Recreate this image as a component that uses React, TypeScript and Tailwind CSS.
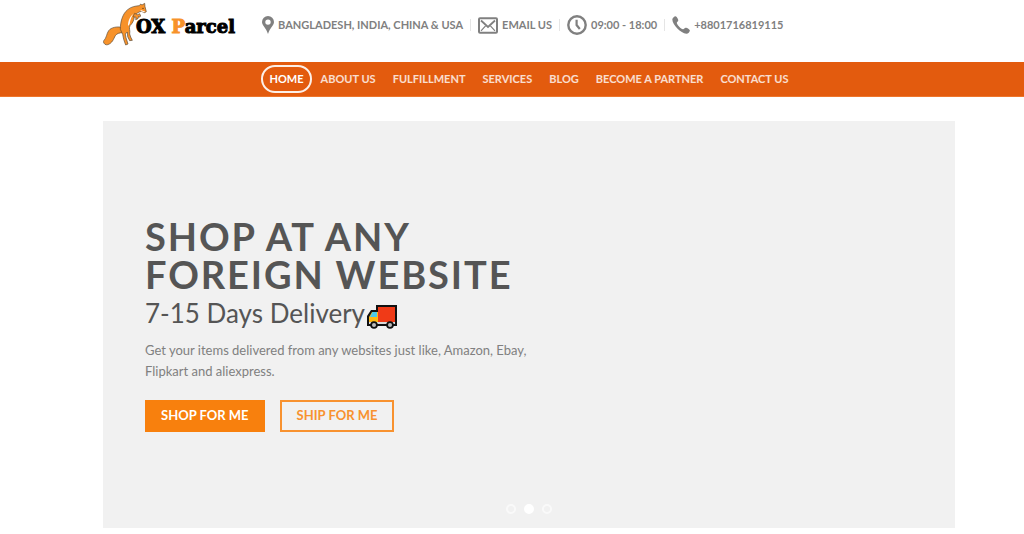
import type { ReactNode } from "react"

type NavItem = {
  label: string
  active?: boolean
}

type ContactItem = {
  label: string
  icon: ReactNode
}

const navItems: NavItem[] = [
  { label: "Home", active: true },
  { label: "About us" },
  { label: "Fulfillment" },
  { label: "Services" },
  { label: "Blog" },
  { label: "Become a partner" },
  { label: "Contact us" },
]

const contactItems: ContactItem[] = [
  { label: "Bangladesh, India, China & USA", icon: <PinIcon /> },
  { label: "Email us", icon: <MailIcon /> },
  { label: "09:00 - 18:00", icon: <ClockIcon /> },
  { label: "+8801716819115", icon: <PhoneIcon /> },
]

const slides = ["Slide 1", "Slide 2", "Slide 3"]

function PinIcon() {
  return (
    <svg viewBox="0 0 12 18" className="h-[18px] w-3" fill="currentColor" aria-hidden="true">
      <path
        fillRule="evenodd"
        d="M6 0a6 6 0 0 1 6 6c0 3.600-4.200 6-6 12C4.200 12 0 9.600 0 6a6 6 0 0 1 6-6Zm0 3.400a2.700 2.700 0 1 0 0 5.400a2.700 2.700 0 0 0 0-5.400Z"
      />
    </svg>
  )
}

function MailIcon() {
  return (
    <svg viewBox="0 0 20 17" className="h-[17px] w-5" fill="none" stroke="currentColor" aria-hidden="true">
      <rect x="1" y="1.200" width="18" height="14.600" rx="1" strokeWidth="2" />
      <path d="M3 3.500l7 6.500l7-6.500" strokeWidth="1.800" />
      <path d="M3 13.800l4.600-5M17 13.800l-4.600-5" strokeWidth="1.200" />
    </svg>
  )
}

function ClockIcon() {
  return (
    <svg viewBox="0 0 20 20" className="size-5" fill="none" stroke="currentColor" aria-hidden="true">
      <circle cx="10" cy="10" r="8.700" strokeWidth="2.400" />
      <path d="M9.600 4.800v5.200l3.200 4" strokeWidth="2.200" />
    </svg>
  )
}

function PhoneIcon() {
  return (
    <svg viewBox="0 0 18 18" className="size-[18px]" fill="currentColor" aria-hidden="true">
      <path d="M0.300 3.600C0.200 2 2.200 0.300 3.600 0.200c1 0 2.700 3 2.700 4.100c0 1.200-1.600 1.700-1.500 2.700c0.300 2 4.200 6 6.200 6.300c1 0.100 1.600-1.600 2.800-1.500c1.200 0 4.200 1.800 4.100 2.800c-0.100 1.500-2 3.400-3.600 3.200C8.800 17.400 0.600 9.200 0.300 3.600Z" />
    </svg>
  )
}

function FoxLogo() {
  return (
    <svg viewBox="24 6 135 132" className="h-11 w-[45px]" aria-hidden="true">
      <g stroke="#5b4a36" strokeWidth="2" strokeLinejoin="round">
        {/* tail */}
        <path
          fill="#f7922a"
          d="M80 82C66 79 48 82 41 92C34 102 36 112 25 124C26 132 32 136 38 134C52 130 56 116 61 107C66 100 74 98 84 98Z"
        />
        {/* body, head and hind legs */}
        <path
          fill="#f7922a"
          d="M76 88C76 66 82 42 98 29C108 20 122 18 133 17L137 12L141 15L149 10L150 20L154 35L149 38L139 34C129 36 122 42 118 50C117 62 112 70 105 77C101 84 106 92 104 102L107 111L112 121L104 122L98 110L97 96L91 102L93 113L99 132L92 135L86 118L83 103Z"
        />
        {/* front paws */}
        <path
          fill="#f7922a"
          d="M119 40L128 44L134 41L137 48L133 52L131 49L129 56L122 59L123 52L114 50Z"
        />
      </g>
      <path fill="#fff" d="M137 30L151 35L147 37L137 33ZM115 42C109 50 106 60 104 72L99 78C99 64 104 50 115 42Z" />
      <circle cx="144" cy="25" r="2" fill="#3b2c1a" />
    </svg>
  )
}

function TruckIcon() {
  return (
    <svg viewBox="0 0 30 24" className="h-6 w-[30px]" aria-hidden="true">
      <path fill="#111" d="M9 0h21v21H0V11l4-6h5Z" />
      <path fill="#f03a17" d="M11 2h17v15H11Z" />
      <path fill="#fdb813" d="M5 7h6v11H2v-6Z" />
      <path fill="#4cc9e8" d="M5.500 7H10v5H3Z" />
      <path fill="#d9d9d9" d="M2 17h26v2H2Z" />
      <circle cx="7" cy="20" r="3.800" fill="#111" />
      <circle cx="23" cy="20" r="3.800" fill="#111" />
      <circle cx="7" cy="20" r="2" fill="#bbb" />
      <circle cx="23" cy="20" r="2" fill="#bbb" />
    </svg>
  )
}

export default function App() {
  return (
    <div className="min-h-screen bg-white font-['Lato',sans-serif] text-[#808080]">
      <header>
        <div className="flex h-[62px] items-start pr-[69px] pl-[103px]">
          <a href="#" className="flex items-start pt-[2px]">
            <FoxLogo />
            <span className="-ml-3 pt-[13px] font-['DejaVu_Serif',serif] text-[18px] leading-6 font-bold whitespace-nowrap text-black [-webkit-text-stroke:1px]">
              OX <span className="text-[#f7922a]">P</span>arcel
            </span>
          </a>

          <ul className="ml-[27px] flex h-[50px] items-center text-[11px] font-bold whitespace-nowrap uppercase">
            {contactItems.map((item, index) => (
              <li key={item.label} className="flex items-center">
                {index > 0 && <span className="mx-[7px] h-3 w-px bg-[#e5e5e5]" />}
                <a href="#" className="flex items-center gap-1">
                  {item.icon}
                  {item.label}
                </a>
              </li>
            ))}
          </ul>
        </div>

        <nav className="border-b border-[#ee762c] bg-[#e35b0e] pr-[69px] pl-[103px]">
          <ul className="flex h-[34px] items-center justify-center gap-px text-[11px] font-bold whitespace-nowrap uppercase">
            {navItems.map((item) => (
              <li key={item.label}>
                <a
                  href="#"
                  className={
                    item.active
                      ? "flex h-7 items-center rounded-full border-2 border-white/90 px-[6px] text-white"
                      : "flex h-7 items-center border-2 border-transparent px-[6px] text-white/80"
                  }
                >
                  {item.label}
                </a>
              </li>
            ))}
          </ul>
        </nav>
      </header>

      <main className="pt-6 pr-[69px] pb-[6px] pl-[103px]">
        <section className="flex min-h-[407px] flex-col bg-[#f1f1f1] px-[42px] pt-24">
          <h1 className="text-[38px] leading-[38px] font-bold tracking-wider text-[#555] uppercase">
            Shop at any
            <br />
            foreign website
          </h1>
          <h2 className="mt-1 flex items-end gap-[2px] text-[26px] leading-8 text-[#555]">
            7-15 Days Delivery
            <TruckIcon />
          </h2>
          <p className="mt-[11px] max-w-[400px] text-[13px] leading-[21px]">
            Get your items delivered from any websites just like, Amazon, Ebay, Flipkart and aliexpress.
          </p>
          <div className="mt-[18px] flex gap-[15px] text-[13px] font-bold">
            <button type="button" className="h-8 bg-[#f8800d] px-4 text-white uppercase">
              Shop for me
            </button>
            <button type="button" className="h-8 border-2 border-[#f8922f] px-[15px] text-[#f8922f] uppercase">
              Ship for me
            </button>
          </div>
          <div className="mt-auto flex justify-center gap-2 pb-[14px]">
            {slides.map((slide, index) => (
              <button
                key={slide}
                type="button"
                aria-label={slide}
                className={
                  index === 1
                    ? "size-[10px] rounded-full border-2 border-white bg-white"
                    : "size-[10px] rounded-full border-2 border-white/60"
                }
              />
            ))}
          </div>
        </section>
      </main>
    </div>
  )
}
